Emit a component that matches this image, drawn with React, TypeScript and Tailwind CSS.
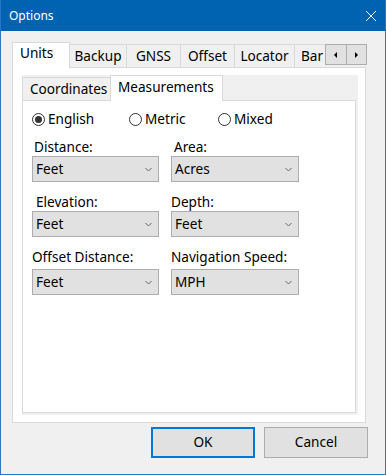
import React from 'react'

// Windows 10 style "Options" dialog, Units > Measurements page

const outerTabs = [
  { label: 'Backup', cls: 'w-[58px] justify-center' },
  { label: 'GNSS', cls: 'w-[55px] justify-center' },
  { label: 'Offset', cls: 'w-[55px] justify-center' },
  { label: 'Locator', cls: 'w-[61px] justify-center' },
  { label: 'Bar', cls: 'w-[47px] justify-start pl-[6px]' },
]

function Chevron() {
  return (
    <svg width="7" height="5" viewBox="0 0 7 5" className="shrink-0">
      <path d="M0.5 1 L3.5 4 L6.5 1" fill="none" stroke="#666" strokeWidth="1" />
    </svg>
  )
}

function Combo({ value, className }: { value: string; className?: string }) {
  return (
    <div
      className={
        'flex h-[26px] items-center justify-between border border-[#adadad] bg-[#e1e1e1] pl-[3px] pr-[6px] ' +
        (className ?? '')
      }
    >
      <span>{value}</span>
      <Chevron />
    </div>
  )
}

function Field({
  label,
  value,
  labelCls,
  comboCls,
  width,
}: {
  label: string
  value: string
  labelCls: string
  comboCls?: string
  width: string
}) {
  return (
    <div className={width}>
      <div className={'h-[19px] leading-[19px] ' + labelCls}>{label}</div>
      <Combo value={value} className={comboCls} />
    </div>
  )
}

function Radio({ label, checked, width }: { label: string; checked?: boolean; width: string }) {
  return (
    <div className={'flex items-center ' + width}>
      <span className="flex h-[13px] w-[13px] items-center justify-center rounded-full border border-[#333] bg-white">
        {checked && <span className="h-[7px] w-[7px] rounded-full bg-[#333]" />}
      </span>
      <span className="ml-[3px]">{label}</span>
    </div>
  )
}

export default function App() {
  return (
    <div className="flex h-[475px] w-[386px] flex-col border-x border-b border-[#2a76c6] bg-[#f0f0f0] font-['Noto_Sans',sans-serif] text-[13.6px] text-black">
      {/* Title bar */}
      <div className="flex h-[31px] shrink-0 items-center justify-between bg-[#0063b1] pl-[8px] pr-[9px] text-[12px] text-white">
        <span>Options</span>
        <svg width="10" height="10" viewBox="0 0 10 10">
          <path d="M0 0 L10 10 M10 0 L0 10" stroke="white" strokeWidth="1" />
        </svg>
      </div>

      <div className="flex flex-col pl-[11px] pt-[11px]">
        {/* Outer tab strip */}
        <div className="relative z-10 -mb-px flex h-[26px]">
          <div className="flex h-[26px] w-[313px] items-end overflow-hidden">
            <div className="flex h-[26px] w-[58px] shrink-0 items-center border-x border-t border-[#d9d9d9] bg-white pb-[4px] pl-[7px]">
              Units
            </div>
            {outerTabs.map((t) => (
              <div
                key={t.label}
                className={
                  '-ml-px flex h-[24px] shrink-0 items-center border border-[#d9d9d9] bg-[#f0f0f0] ' + t.cls
                }
              >
                {t.label}
              </div>
            ))}
          </div>
          <div className="mt-[2px] flex h-[21px]">
            <div className="flex w-[22px] items-center justify-center border border-[#adadad] bg-[#e1e1e1]">
              <svg width="4" height="6" viewBox="0 0 4 6">
                <path d="M3 0 L0 3 L3 6 Z" fill="#000" />
              </svg>
            </div>
            <div className="-ml-px flex w-[21px] items-center justify-center border border-[#adadad] bg-[#e1e1e1]">
              <svg width="4" height="6" viewBox="0 0 4 6">
                <path d="M0 0 L3 3 L0 6 Z" fill="#000" />
              </svg>
            </div>
          </div>
        </div>

        {/* Outer tab page */}
        <div className="h-[356px] w-[354px] border border-[#d9d9d9] bg-white pb-[7px] pl-[9px] pr-[7px] pt-[7px]">
          <div className="flex h-full flex-col bg-[#f0f0f0] pb-[2px] pr-[2px]">
            {/* Inner tab strip */}
            <div className="relative z-10 -mb-px flex h-[26px] items-end">
              <div className="flex h-[24px] w-[89px] items-center border border-[#d9d9d9] bg-[#f0f0f0] pl-[7px]">
                Coordinates
              </div>
              <div className="-ml-px flex h-[26px] w-[113px] items-center border-x border-t border-[#d9d9d9] bg-white pb-[3px] pl-[7px]">
                Measurements
              </div>
            </div>

            {/* Inner tab page */}
            <div className="flex-1 border border-[#d9d9d9] bg-white pl-[9px]">
              <div className="mt-[8px] flex h-[20px] items-center">
                <Radio label="English" checked width="w-[97px]" />
                <Radio label="Metric" width="w-[89px]" />
                <Radio label="Mixed" width="w-[80px]" />
              </div>

              <div className="mt-[8px] flex gap-[12px]">
                <Field label="Distance:" value="Feet" labelCls="pl-[2px]" width="w-[127px]" />
                <Field label="Area:" value="Acres" labelCls="pl-[3px]" width="w-[128px]" />
              </div>

              <div className="mt-[10px] flex gap-[12px]">
                <Field label="Elevation:" value="Feet" labelCls="pl-[4px]" width="w-[127px]" />
                <Field label="Depth:" value="Feet" labelCls="pl-0" width="w-[128px]" />
              </div>

              <div className="mt-[10px] flex gap-[12px]">
                <Field
                  label="Offset Distance:"
                  value="Feet"
                  labelCls="pl-0"
                  comboCls="mt-[3px]"
                  width="w-[127px]"
                />
                <Field
                  label="Navigation Speed:"
                  value="MPH"
                  labelCls="pl-0"
                  comboCls="mt-[3px]"
                  width="w-[128px]"
                />
              </div>
            </div>
          </div>
        </div>
      </div>

      {/* Buttons */}
      <div className="mt-[4px] flex justify-end gap-[9px] pr-[17px]">
        <button className="h-[31px] w-[104px] border-2 border-[#0078d7] bg-[#e1e1e1]">OK</button>
        <button className="h-[31px] w-[104px] border border-[#adadad] bg-[#e1e1e1]">Cancel</button>
      </div>
    </div>
  )
}
